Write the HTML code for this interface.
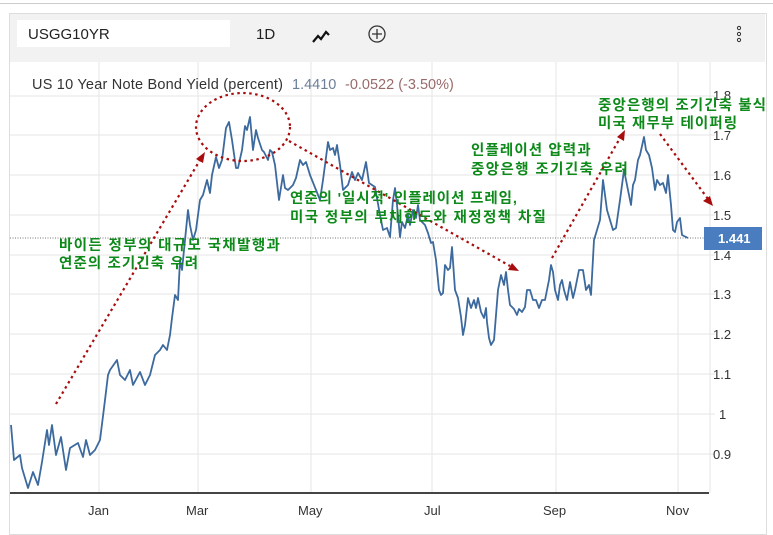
<!DOCTYPE html>
<html><head><meta charset="utf-8"><style>
body{margin:0;width:773px;height:524px;background:#fff;overflow:hidden;font-family:"Liberation Sans",sans-serif;position:relative}
.kr{font-family:"Liberation Sans","Noto Sans CJK KR",sans-serif;fill:#0d8a1a;font-size:14.5px;font-weight:bold;letter-spacing:1.1px}
</style></head><body>
<div style="position:absolute;left:0;top:0;width:773px;height:3px;border-bottom:1px solid #ccc;background:#fff"></div>
<div style="position:absolute;left:9px;top:13px;width:756px;height:520px;border:1px solid #ddd;background:#fff"></div>
<div style="position:absolute;left:10px;top:14px;width:755px;height:48px;background:#f2f2f2"></div>
<div style="position:absolute;left:17px;top:20px;width:213px;height:27px;background:#fff"></div>
<div style="position:absolute;left:28px;top:26px;font-size:15px;color:#222">USGG10YR</div>
<div style="position:absolute;left:256px;top:26px;font-size:15px;color:#222">1D</div>
<svg style="position:absolute;left:0;top:0" width="773" height="524">
<path d="M313 42 L318 36 L321 39 L326 32 L329 35" stroke="#111" stroke-width="2.2" fill="none"/>
<circle cx="377" cy="34" r="8" stroke="#333" stroke-width="1.3" fill="none"/>
<path d="M377 29v10M372 34h10" stroke="#333" stroke-width="1.3"/>
<circle cx="739" cy="28" r="1.6" fill="none" stroke="#333"/><circle cx="739" cy="34" r="1.6" fill="none" stroke="#333"/><circle cx="739" cy="40" r="1.6" fill="none" stroke="#333"/>
<g stroke="#e6e6e6" stroke-width="1">
<path d="M99 62V493M198 62V493M311 62V493M432 62V493M556 62V493M678 62V493M710 62V493"/>
<path d="M10 96H715M10 135H715M10 175H715M10 215H715M10 255H715M10 294H715M10 334H715M10 374H715M10 414H715M10 454H715"/>
</g>
<path d="M10 238H704" stroke="#777" stroke-width="1" stroke-dasharray="1 1.5"/>
<path d="M10 493H709" stroke="#444" stroke-width="2"/>
<g font-size="13" fill="#333">
<text x="713" y="100">1.8</text><text x="713" y="140">1.7</text><text x="713" y="180">1.6</text><text x="713" y="220">1.5</text><text x="713" y="260">1.4</text><text x="713" y="299">1.3</text><text x="713" y="339">1.2</text><text x="713" y="379">1.1</text><text x="719" y="419">1</text><text x="713" y="459">0.9</text>
<text x="88" y="515">Jan</text><text x="186" y="515">Mar</text><text x="298" y="515">May</text><text x="424" y="515">Jul</text><text x="543" y="515">Sep</text><text x="666" y="515">Nov</text>
</g>
<text x="32" y="89" font-size="14.5" fill="#333" textLength="251">US 10 Year Note Bond Yield (percent)</text>
<text x="292" y="89" font-size="14.5" fill="#6b7f99">1.4410</text>
<text x="345" y="89" font-size="14.5" fill="#9a6a6a">-0.0522 (-3.50%)</text>
<polyline fill="none" stroke="#3d6a9e" stroke-width="1.8" stroke-linejoin="round" points="11,425 14,460 20,455 22,468 28,488 33,472 38,485 42,462 47,430 49,445 52,425 56,455 61,437 66,470 70,448 78,443 83,457 86,440 90,455 95,450 100,440 105,400 108,375 110,370 117,360 120,375 125,380 130,370 133,385 140,372 145,385 150,375 155,355 160,350 163,345 167,350 170,335 172,318 175,295 178,300 180,260 182,270 188,210 190,225 193,240 196,230 200,200 203,195 207,180 210,193 212,175 216,157 219,168 222,160 226,128 229,122 232,140 236,168 238,168 242,150 245,126 247,130 250,117 253,150 256,130 258,138 262,150 264,152 268,160 270,150 272,152 275,165 279,200 283,175 285,188 288,190 293,185 296,178 300,160 303,165 306,162 310,175 316,190 320,200 323,180 325,165 328,142 330,150 333,148 335,155 337,145 340,165 343,190 348,185 352,172 355,180 358,173 362,180 366,162 369,183 375,187 380,215 383,230 387,228 390,237 393,200 395,188 397,205 400,237 402,222 405,228 408,215 410,225 413,210 416,218 418,205 420,220 425,225 428,233 431,243 433,242 436,260 439,290 441,295 443,293 445,265 448,270 450,268 452,247 455,290 458,298 461,317 463,335 465,325 468,298 471,308 474,300 476,308 478,298 481,312 484,318 486,308 487,322 489,338 491,345 494,340 496,315 498,290 501,275 504,285 506,272 508,290 510,305 514,309 517,315 519,309 522,312 525,307 527,290 530,290 533,300 536,300 539,308 542,300 545,300 549,280 551,265 553,272 555,290 558,300 560,285 562,280 564,290 567,300 570,282 573,298 575,290 579,270 583,270 586,290 589,285 591,295 594,240 597,230 600,220 603,180 605,195 607,210 610,220 613,230 616,228 620,200 624,170 627,185 631,205 633,185 635,180 638,160 640,155 644,137 646,150 649,155 652,168 655,190 657,180 660,185 663,183 666,193 668,175 671,205 673,230 675,232 677,222 680,218 682,235 688,238"/>
<g stroke="#a80c0c" stroke-width="2.2" stroke-dasharray="2.5 3.5" fill="none">
<path d="M56 404 L200 160"/>
<ellipse cx="243" cy="127" rx="47" ry="34"/>
<path d="M289 141 L510 266"/>
<path d="M552 258 L620 138"/>
<path d="M660 134 L708 199"/>
</g>
<g fill="#a80c0c">
<path d="M205 152 L203 163 L196 159Z"/>
<path d="M519 271 L508 270 L512 263Z"/>
<path d="M625 130 L624 141 L617 137Z"/>
<path d="M713 206 L703 201 L710 196Z"/>
</g>
<text class="kr" x="59" y="250" textLength="222">바이든 정부의 대규모 국채발행과</text>
<text class="kr" x="59" y="268">연준의 조기긴축 우려</text>
<text class="kr" x="290" y="203" textLength="228">연준의 '일시적' 인플레이션 프레임,</text>
<text class="kr" x="290" y="222" textLength="257">미국 정부의 부채한도와 재정정책 차질</text>
<text class="kr" x="471" y="155">인플레이션 압력과</text>
<text class="kr" x="471" y="174" textLength="158">중앙은행 조기긴축 우려</text>
<text class="kr" x="598" y="110">중앙은행의 조기긴축 불식</text>
<text class="kr" x="598" y="128">미국 재무부 테이퍼링</text>
<rect x="704" y="227" width="58" height="23" fill="#4a7dbf"/>
<text x="718" y="243" font-size="13" font-weight="bold" fill="#fff">1.441</text>
</svg>
</body></html>
